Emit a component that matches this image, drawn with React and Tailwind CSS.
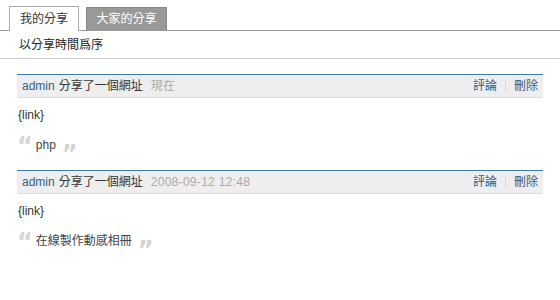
export default function App() {
  const font = { fontFamily: '"Liberation Sans", "Noto Sans CJK TC", sans-serif' };
  const q = { fontFamily: '"DejaVu Sans", sans-serif' };
  const Item = ({ time, body, mt }) => (
    <div className={`mx-[17px] ${mt}`}>
      <div className="border-t border-[#3c7fb1] bg-[#eeeeee] border-b border-b-[#dcdcdc] h-[24px] flex items-center justify-between px-[5px]">
        <div className="flex items-center">
          <span className="text-[#2c5e8c]">admin</span>
          <span className="ml-[4px] text-[#333]">分享了一個網址</span>
          <span className="ml-[8px] text-[#aaa] tracking-[0.3px]">{time}</span>
        </div>
        <div className="flex items-center text-[#2c5e8c]">
          <span>評論</span>
          <span className="mx-[8px] w-px h-[12px] bg-[#d8d8d8]"></span>
          <span>刪除</span>
        </div>
      </div>
      <div className="pt-[9px] px-px text-[#333]">{'{link}'}</div>
      <div className="mt-[8px] h-[30px] flex items-start text-[#444]">
        <span className="text-[#d4d4d4] text-[24px] font-bold leading-none mt-[3px]" style={q}>“</span>
        <span className="ml-[3px] mt-[6px]">{body}</span>
        <span className="ml-[6px] text-[#d4d4d4] text-[24px] font-bold leading-none mt-[11px]" style={q}>”</span>
      </div>
    </div>
  );
  return (
    <div className="w-[560px] h-[300px] bg-white text-[12px] leading-[16px]" style={font}>
      <div className="pt-[6px] border-b border-[#999] flex items-end pl-[9px] h-[31px]">
        <div className="w-[70px] h-[25px] border border-[#aaa] border-b-0 bg-white -mb-px flex items-center justify-center text-[#333] relative">我的分享</div>
        <div className="ml-[7px] w-[81px] h-[23px] bg-[#999] border border-[#888] border-b-0 flex items-center justify-center text-white">大家的分享</div>
      </div>
      <div className="h-[28px] border-b border-[#ccc] flex items-center pl-[19px] text-[#222]">以分享時間爲序</div>
      <Item time="現在" body="php" mt="mt-[15px]" />
      <Item time="2008-09-12 12:48" body="在線製作動感相冊" mt="mt-[9px]" />
    </div>
  );
}
